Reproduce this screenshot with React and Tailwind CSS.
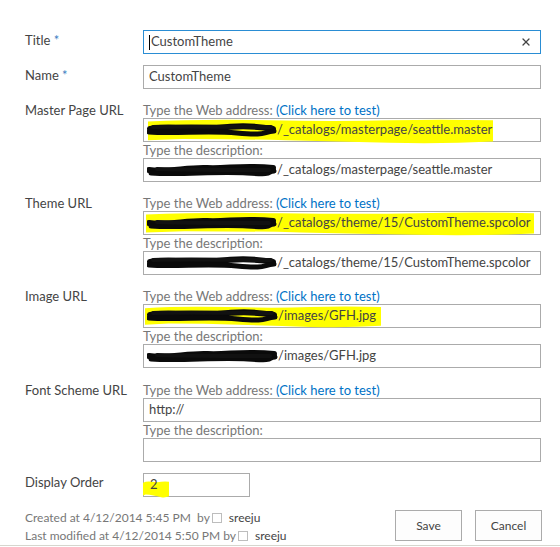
import React from "react";
import { X } from "lucide-react";

function Scribble({ w = 130, variant = 0 }) {
  const paths = [
    [
      "M3 8 C 25 4, 45 10, 70 7 S 110 5, 126 8",
      "M2 11 C 30 13, 60 9, 90 12 S 115 11, 127 10",
      "M6 6 C 40 5, 80 6, 124 6",
    ],
    [
      "M2 9 C 20 12, 40 6, 60 7 S 95 4, 126 7",
      "M4 12 C 35 14, 70 10, 100 12 S 118 11, 127 10",
      "M10 8 C 40 9, 90 9, 122 9",
    ],
  ];
  const p = paths[variant % 2];
  return (
    <span className="inline-block shrink-0 -ml-[2px]" style={{ width: w + 2 }}>
      <svg width={w + 2} height="18" viewBox="0 0 130 18" preserveAspectRatio="none" className="block">
        <path d={p[0]} stroke="#0a0a0a" strokeWidth="6" fill="none" strokeLinecap="round" />
        <path d={p[1]} stroke="#0a0a0a" strokeWidth="5" fill="none" strokeLinecap="round" />
        <path d={p[2]} stroke="#111" strokeWidth="4" fill="none" strokeLinecap="round" />
      </svg>
    </span>
  );
}

function Highlight({ className }) {
  return (
    <svg
      className={"absolute pointer-events-none " + className}
      viewBox="0 0 100 20"
      preserveAspectRatio="none"
    >
      <path
        d="M0 2 Q 15 0 35 1 T 70 1 T 100 1 L 100 18 Q 85 20 70 19 T 40 17 T 10 16 L 0 17 Z"
        fill="#ffff00"
      />
    </svg>
  );
}

function Box({ className = "", children }) {
  return (
    <div className={"relative h-[24px] border bg-white flex items-center pl-[5px] " + className}>
      {children}
    </div>
  );
}

function UrlBlock({ label, addr, desc, hl }) {
  return (
    <div className="grid grid-cols-[118px_398px]">
      <div className="leading-[16px] text-[#444]">{label}</div>
      <div className="flex flex-col">
        <div className="leading-[16px] text-[#777]">
          Type the Web address: <span className="text-[#0072c6]">(Click here to test)</span>
        </div>
        <Box className="border-[#ababab]">
          {hl}
          <div className="relative z-10 flex items-center whitespace-nowrap">{addr}</div>
        </Box>
        <div className="leading-[16px] text-[#777]">Type the description:</div>
        <Box className="border-[#ababab]">
          <div className="relative z-10 flex items-center whitespace-nowrap">{desc}</div>
        </Box>
      </div>
    </div>
  );
}

export default function App() {
  return (
    <div className="w-[560px] h-[547px] bg-white overflow-hidden font-['Lato',sans-serif] text-[13px] text-[#444] flex flex-col">
      <div className="pt-[30px] pl-[25px] flex flex-col">
        {/* Title */}
        <div className="grid grid-cols-[118px_398px] items-start">
          <div className="leading-[20px]">
            Title <span className="text-[#3c7fc2]">*</span>
          </div>
          <Box className="border-[#2a8dd4] justify-between pr-[8px]">
            <span className="flex items-center">
              <span className="w-[1px] h-[15px] bg-black mr-[1px]" />
              CustomTheme
            </span>
            <X size={12} strokeWidth={2.6} color="#444" />
          </Box>
        </div>
        {/* Name */}
        <div className="grid grid-cols-[118px_398px] items-start mt-[11px]">
          <div className="leading-[20px]">
            Name <span className="text-[#3c7fc2]">*</span>
          </div>
          <Box className="border-[#ababab]">CustomTheme</Box>
        </div>

        <div className="mt-[13px]">
          <UrlBlock
            label="Master Page URL"
            hl={<Highlight className="left-[4px] top-[0px] w-[345px] h-[25px]" />}
            addr={
              <>
                <Scribble w={128} />
                <span>/_catalogs/masterpage/seattle.master</span>
              </>
            }
            desc={
              <>
                <Scribble w={128} variant={1} />
                <span>/_catalogs/masterpage/seattle.master</span>
              </>
            }
          />
        </div>
        <div className="mt-[13px]">
          <UrlBlock
            label="Theme URL"
            hl={<Highlight className="left-[2px] top-[0px] w-[388px] h-[24px]" />}
            addr={
              <>
                <Scribble w={128} variant={1} />
                <span>/_catalogs/theme/15/CustomTheme.spcolor</span>
              </>
            }
            desc={
              <>
                <Scribble w={128} />
                <span>/_catalogs/theme/15/CustomTheme.spcolor</span>
              </>
            }
          />
        </div>
        <div className="mt-[13px]">
          <UrlBlock
            label="Image URL"
            hl={<Highlight className="left-[1px] top-[1px] w-[236px] h-[22px]" />}
            addr={
              <>
                <Scribble w={129} />
                <span>/images/GFH.jpg</span>
              </>
            }
            desc={
              <>
                <Scribble w={129} variant={1} />
                <span>/images/GFH.jpg</span>
              </>
            }
          />
        </div>
        <div className="mt-[14px]">
          <UrlBlock label="Font Scheme URL" hl={null} addr={<span>http://</span>} desc={null} />
        </div>

        {/* Display order */}
        <div className="grid grid-cols-[118px_398px] items-start mt-[11px]">
          <div className="leading-[18px]">Display Order</div>
          <div className="relative h-[24px] w-[107px] border border-[#ababab] bg-white flex items-center pl-[6px]">
            <Highlight className="left-[-1px] top-[7px] w-[26px] h-[17px]" />
            <span className="relative z-10">2</span>
          </div>
        </div>

        {/* Footer */}
        <div className="mt-[12px] flex items-start h-[36px]">
          <div className="flex flex-col text-[12px] leading-[18px] text-[#777] w-[370px]">
            <div className="flex items-center whitespace-pre">
              <span>Created at 4/12/2014 5:45 PM  by</span>
              <span className="inline-block w-[10px] h-[10px] border border-[#bdbdbd] ml-[2px]" />
              <span className="ml-[7px] text-[#444]">sreeju</span>
            </div>
            <div className="flex items-center whitespace-pre">
              <span>Last modified at 4/12/2014 5:50 PM by</span>
              <span className="inline-block w-[10px] h-[10px] border border-[#bdbdbd] ml-[2px]" />
              <span className="ml-[7px] text-[#444]">sreeju</span>
            </div>
          </div>
          <div className="flex gap-[13px] mt-[1px]">
            <button className="w-[67px] h-[31px] border border-[#ababab] bg-[#fdfdfd] text-[12px] text-[#444]">
              Save
            </button>
            <button className="w-[67px] h-[31px] border border-[#ababab] bg-[#fdfdfd] text-[12px] text-[#444]">
              Cancel
            </button>
          </div>
        </div>
      </div>
      <div className="h-[1px] bg-[#d6d6ce]" />
    </div>
  );
}
